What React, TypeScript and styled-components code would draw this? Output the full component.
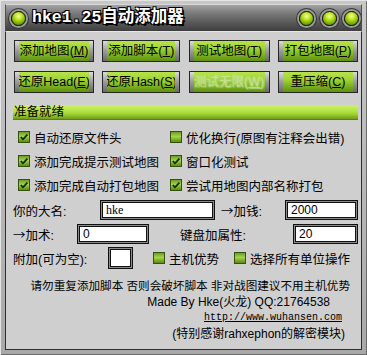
import React from "react";
import styled, { createGlobalStyle } from "styled-components";

const Global = createGlobalStyle`
  html, body { margin: 0; padding: 0; background: #b4b4b4; }
  * { box-sizing: border-box; }
`;

const UI = `"Liberation Sans", "Noto Sans CJK SC", sans-serif`;

const Window = styled.div`
  width: 367px;
  height: 355px;
  padding: 4px 5px 5px 5px;
  display: flex;
  flex-direction: column;
  background: linear-gradient(to bottom, #c8c8c8, #a8a8a8);
  box-shadow: inset 1px 1px 0 #e4e4e4, inset -1px -1px 0 #6a6a6a;
  font-family: ${UI};
  font-size: 12px;
  color: #000;
`;

const TitleBar = styled.div`
  height: 27px;
  display: flex;
  align-items: center;
  padding: 0 2.5px 0 4.5px;
  background: linear-gradient(to bottom, #a4a4a4 0%, #7c7c7c 30%, #575757 70%, #3e3e3e 100%);
  border-top: 1px solid #d8d8d8;
  border-left: 1px solid #505050;
  border-right: 1px solid #505050;
`;

const Orb = styled.span<{ $gap?: number }>`
  flex: none;
  width: 15px;
  height: 15px;
  margin-left: ${(p) => p.$gap ?? 0}px;
  border-radius: 50%;
  background: radial-gradient(circle at 50% 32%, #f4ff9c 0%, #c2e82a 30%, #82b400 62%, #3e6800 100%);
  border: 1px solid #151515;
  box-shadow: 0 0 0 2px #9a9a9a, 0 0 0 3px #353535;
`;

const Title = styled.span`
  margin-left: 6.5px;
  font-family: "Liberation Mono", "Noto Sans CJK SC", monospace;
  font-weight: bold;
  font-size: 16.5px;
  line-height: 18px;
  color: #fff;
  text-shadow: 1px 1px 0 #000, -1px -1px 0 #000, 1px -1px 0 #000, -1px 1px 0 #000, 2px 2px 0 #000;
  flex: 1;
`;

const Panel = styled.div`
  flex: 1;
  display: flex;
  flex-direction: column;
  background: #cfcfcf;
  border: 1px solid #2e2e2e;
  border-top: 1px solid #e6e6e6;
`;

const ButtonBlock = styled.div`
  margin: 8px 3px 0 8px;
  display: flex;
  flex-direction: column;
  gap: 9px;
`;

const ButtonRow = styled.div`
  display: flex;
  justify-content: space-between;
`;

const Btn = styled.div<{ $w: number }>`
  width: ${(p) => p.$w}px;
  height: 22px;
  display: flex;
  border: 1px solid #262626;
`;

const Cap = styled.span`
  width: 4px;
  flex: none;
  background: linear-gradient(to bottom, #dcdcdc, #9a9a9a 50%, #6a6a6a);
`;

const Face = styled.span<{ $disabled?: boolean }>`
  flex: 1;
  display: flex;
  align-items: center;
  justify-content: center;
  overflow: hidden;
  background: linear-gradient(to bottom, #b6e44a 0%, #9fd234 40%, #86bd24 60%, #5f8f12 100%);
  color: ${(p) => (p.$disabled ? "rgba(200,228,150,0.75)" : "#000")};
  text-shadow: ${(p) => (p.$disabled ? "0 0 2px #cfeaa0, 1px 1px 1px #9cc860" : "none")};
  font-size: 12.5px;
  line-height: 14px;
  white-space: nowrap;
`;

const Key = styled.span`
  text-decoration: underline;
`;

const Status = styled.div`
  margin: 12px 3px 0 7px;
  height: 15px;
  display: flex;
  align-items: center;
  padding-left: 1px;
  background: linear-gradient(to bottom, #cdf266 0%, #b4e244 45%, #98cc2e 70%, #6e9e1a 100%);
  border-bottom: 1px solid #55801a;
  font-size: 12.5px;
  line-height: 14px;
`;

const CheckGrid = styled.div`
  margin: 5px 0 0 12px;
  display: grid;
  grid-template-columns: 152px 1fr;
  grid-auto-rows: 24px;
`;

const CheckItem = styled.label<{ $ml?: number }>`
  display: flex;
  align-items: center;
  gap: 4px;
  margin-left: ${(p) => p.$ml ?? 0}px;
  white-space: nowrap;
  font-size: 12.5px;
`;

const Box = styled.span`
  flex: none;
  width: 12px;
  height: 12px;
  display: flex;
  align-items: center;
  justify-content: center;
  border: 1px solid #35520e;
  background: linear-gradient(to bottom, #6e9c22 0%, #a4d44a 45%, #8cc030 60%, #5e8a16 100%);
`;

const Check = ({ on }: { on?: boolean }) => (
  <Box>
    {on && (
      <svg width="10" height="10" viewBox="0 0 10 10">
        <path d="M1.8 5 L4 7.3 L8.4 2.6" fill="none" stroke="#0e2a00" strokeWidth="1.7" />
      </svg>
    )}
  </Box>
);

const Form = styled.div`
  margin: 1px 0 0 7px;
  display: flex;
  flex-direction: column;
`;

const FormRow = styled.div`
  height: 24px;
  display: flex;
  align-items: center;
`;

const Label = styled.span<{ $w?: number; $ml?: number }>`
  width: ${(p) => (p.$w ? `${p.$w}px` : "auto")};
  margin-left: ${(p) => p.$ml ?? 0}px;
  flex: none;
  white-space: nowrap;
  font-size: 12.5px;
`;

const Arrow = styled.span`
  font-family: "Noto Sans CJK SC", sans-serif;
`;

const Input = styled.div<{ $w: number; $h?: number; $serif?: boolean }>`
  width: ${(p) => p.$w}px;
  height: ${(p) => p.$h ?? 20}px;
  flex: none;
  display: flex;
  align-items: center;
  padding-left: 5px;
  background: #fff;
  border: 1px solid #111;
  box-shadow: inset 0 0 0 1px #8a8a8a, inset 0 0 0 2px #111;
  font-family: ${(p) => (p.$serif ? `"Liberation Serif", serif` : `"Liberation Sans", sans-serif`)};
  font-size: 12px;
`;

const Notes = styled.div`
  margin-top: 8px;
  display: flex;
  flex-direction: column;
  align-items: flex-end;
`;

const Note = styled.div<{ $mr: number; $mono?: boolean; $size?: number }>`
  margin-right: ${(p) => p.$mr}px;
  height: 16px;
  line-height: 16px;
  white-space: nowrap;
  font-family: ${(p) => (p.$mono ? `"Liberation Mono", monospace` : UI)};
  font-size: ${(p) => p.$size ?? 12}px;
  text-decoration: ${(p) => (p.$mono ? "underline" : "none")};
`;

const Button = ({ w, label, k, disabled }: { w: number; label: string; k: string; disabled?: boolean }) => (
  <Btn $w={w}>
    <Cap />
    <Face $disabled={disabled}>
      {label}(<Key>{k}</Key>)
    </Face>
    <Cap />
  </Btn>
);

export default function App() {
  return (
    <>
      <Global />
      <Window>
        <TitleBar>
          <Orb />
          <Title>hke1.25自动添加器</Title>
          <Orb />
          <Orb $gap={8} />
          <Orb $gap={7} />
        </TitleBar>
        <Panel>
          <ButtonBlock>
            <ButtonRow>
              <Button w={80} label="添加地图" k="M" />
              <Button w={78} label="添加脚本" k="T" />
              <Button w={81} label="测试地图" k="T" />
              <Button w={80} label="打包地图" k="P" />
            </ButtonRow>
            <ButtonRow>
              <Button w={80} label="还原Head" k="E" />
              <Button w={78} label="还原Hash" k="S" />
              <Button w={81} label="测试无限" k="W" disabled />
              <Button w={80} label="重压缩" k="C" />
            </ButtonRow>
          </ButtonBlock>
          <Status>准备就绪</Status>
          <CheckGrid>
            <CheckItem><Check on />自动还原文件头</CheckItem>
            <CheckItem><Check />优化换行(原图有注释会出错)</CheckItem>
            <CheckItem><Check on />添加完成提示测试地图</CheckItem>
            <CheckItem><Check on />窗口化测试</CheckItem>
            <CheckItem><Check on />添加完成自动打包地图</CheckItem>
            <CheckItem><Check on />尝试用地图内部名称打包</CheckItem>
          </CheckGrid>
          <Form>
            <FormRow>
              <Label $w={87}>你的大名:</Label>
              <Input $w={115} $serif>hke</Input>
              <Label $w={64} $ml={6}><Arrow>→</Arrow>加钱:</Label>
              <Input $w={73}>2000</Input>
            </FormRow>
            <FormRow>
              <Label $w={64}><Arrow>→</Arrow>加术:</Label>
              <Input $w={72}>0</Input>
              <Label $w={113} $ml={31}>键盘加属性:</Label>
              <Input $w={65}>20</Input>
            </FormRow>
            <FormRow>
              <Label $w={95}>附加(可为空):</Label>
              <Input $w={25} $h={22} />
              <CheckItem $ml={20}><Check />主机优势</CheckItem>
              <CheckItem $ml={15}><Check />选择所有单位操作</CheckItem>
            </FormRow>
          </Form>
          <Notes>
            <Note $mr={11} $size={11.6}>请勿重复添加脚本 否则会破坏脚本 非对战图建议不用主机优势</Note>
            <Note $mr={31}>Made By Hke(火龙) QQ:21764538</Note>
            <Note $mr={19} $mono $size={10}>http://www.wuhansen.com</Note>
            <Note $mr={16}>(特别感谢rahxephon的解密模块)</Note>
          </Notes>
        </Panel>
      </Window>
    </>
  );
}
